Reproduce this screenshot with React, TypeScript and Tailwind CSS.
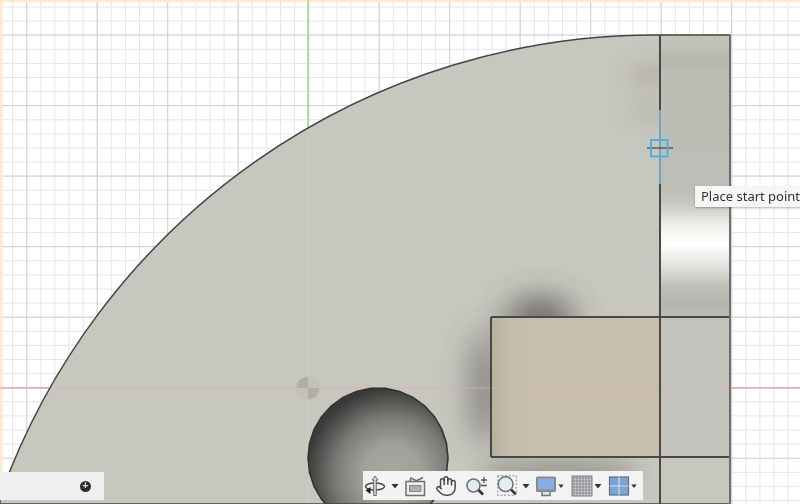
import { Hand } from "lucide-react";

const minorX = Array.from({ length: 58 }, (_, i) => 12.6 + i * 14.1);
const minorY = Array.from({ length: 36 }, (_, i) => 7 + i * 14.1);
const majorX = Array.from({ length: 12 }, (_, i) => 26.7 + i * 70.5);
const majorY = Array.from({ length: 7 }, (_, i) => 35 + i * 70.55);

const BODY = "M730,35 L660,35 A696,696 0 0 0 0,497 L0,504 L730,504 Z";
const holePts = Array.from({ length: 30 }, (_, i) => {
  const a = (i / 30) * Math.PI * 2;
  return `${378 + 70 * Math.cos(a)},${458 + 70 * Math.sin(a)}`;
}).join(" ");

function Scene() {
  return (
    <svg width="800" height="504" viewBox="0 0 800 504" className="block">
      <defs>
        <filter id="b18" filterUnits="userSpaceOnUse" x="0" y="0" width="800" height="504"><feGaussianBlur stdDeviation="16" /></filter>
        <filter id="b10" filterUnits="userSpaceOnUse" x="0" y="0" width="800" height="504"><feGaussianBlur stdDeviation="10" /></filter>
        <clipPath id="body"><path d={BODY} /></clipPath>
        <clipPath id="left"><path d="M660,35 A696,696 0 0 0 0,497 L0,504 L660,504 Z" /></clipPath>
        <linearGradient id="strip" gradientUnits="userSpaceOnUse" x1="0" y1="35" x2="0" y2="317">
          <stop offset="0" stopColor="#c4c4bb" />
          <stop offset="0.05" stopColor="#c0c0b6" />
          <stop offset="0.085" stopColor="#b6b6ab" />
          <stop offset="0.14" stopColor="#bcbdb5" />
          <stop offset="0.55" stopColor="#bcbeb7" />
          <stop offset="0.6" stopColor="#c9c9c4" />
          <stop offset="0.68" stopColor="#f2f2ee" />
          <stop offset="0.74" stopColor="#ffffff" />
          <stop offset="0.81" stopColor="#e6e6e2" />
          <stop offset="0.89" stopColor="#c0c0ba" />
          <stop offset="0.95" stopColor="#b5b5af" />
          <stop offset="1" stopColor="#bdbdb7" />
        </linearGradient>
        <linearGradient id="tan" gradientUnits="userSpaceOnUse" x1="491" y1="0" x2="660" y2="0">
          <stop offset="0" stopColor="#b5b09f" />
          <stop offset="0.1" stopColor="#c2bba7" />
          <stop offset="0.25" stopColor="#c8c0ac" />
          <stop offset="1" stopColor="#c7bfab" />
        </linearGradient>
        <radialGradient id="hole" gradientUnits="userSpaceOnUse" cx="392" cy="474" r="86">
          <stop offset="0" stopColor="#a9a9a3" />
          <stop offset="0.35" stopColor="#a0a09a" />
          <stop offset="0.65" stopColor="#7c7c78" />
          <stop offset="0.9" stopColor="#4c4c4a" />
          <stop offset="1" stopColor="#3a3a39" />
        </radialGradient>
      </defs>
      <rect width="800" height="504" fill="#ffffff" />
      {minorX.map((x) => <line key={`vx${x}`} x1={x} x2={x} y1="0" y2="504" stroke="#e6e6ea" strokeWidth="1" />)}
      {minorY.map((y) => <line key={`hy${y}`} x1="0" x2="800" y1={y} y2={y} stroke="#e6e6ea" strokeWidth="1" />)}
      {majorX.map((x) => <line key={`Vx${x}`} x1={x} x2={x} y1="0" y2="504" stroke="#d2d2d6" strokeWidth="1" />)}
      {majorY.map((y) => <line key={`Hy${y}`} x1="0" x2="800" y1={y} y2={y} stroke="#d2d2d6" strokeWidth="1" />)}
      <rect x="0" y="0" width="2.5" height="504" fill="#ffe9c8" />
      <rect x="0" y="0" width="800" height="2" fill="#ffe9c8" />
      <line x1="0" x2="800" y1="388" y2="388" stroke="#e88f8f" strokeWidth="1.2" />
      <line x1="308" x2="308" y1="0" y2="388" stroke="#8fdc88" strokeWidth="1.4" />

      <path d={BODY} fill="#c7c6bf" />
      <g clipPath="url(#left)">
        <ellipse cx="652" cy="75" rx="24" ry="12" fill="#a5a49c" opacity="0.55" filter="url(#b10)" />
        <ellipse cx="650" cy="112" rx="22" ry="10" fill="#a8a79f" opacity="0.5" filter="url(#b10)" />
        <ellipse cx="540" cy="318" rx="34" ry="18" fill="#3e3e3b" opacity="0.8" filter="url(#b18)" />
        <ellipse cx="486" cy="388" rx="14" ry="58" fill="#4c4c48" opacity="0.62" filter="url(#b18)" />
        <ellipse cx="560" cy="472" rx="80" ry="12" fill="#6f6f68" opacity="0.55" filter="url(#b10)" />
      </g>
      <rect x="660" y="35" width="70" height="282" fill="url(#strip)" />
      <rect x="660" y="317" width="70" height="140" fill="#c3c3bd" />
      <rect x="491" y="317" width="169" height="140" fill="url(#tan)" />
      <line x1="308" x2="308" y1="128" y2="504" stroke="#bfd8b8" strokeWidth="1" />
      <line x1="40" x2="730" y1="388" y2="388" stroke="#dcb0ac" strokeWidth="1" opacity="0.8" />

      <circle cx="308" cy="388" r="11.5" fill="#a9a8a1" opacity="0.8" />
      <path d="M308,376.5 A11.5,11.5 0 0 1 319.5,388 L308,388 Z M308,388 L296.5,388 A11.5,11.5 0 0 0 308,399.5 Z" fill="#c7c6bf" opacity="0.8" />

      <polygon points={holePts} fill="url(#hole)" stroke="#333331" strokeWidth="1.6" />

      <g clipPath="url(#body)" fill="none" stroke="#484846">
        <line x1="660" x2="660" y1="35" y2="504" strokeWidth="2" />
        <line x1="491" x2="730" y1="317" y2="317" strokeWidth="2" />
        <line x1="491" x2="730" y1="457" y2="457" strokeWidth="2" />
        <line x1="491" x2="491" y1="317" y2="457" strokeWidth="2" />
      </g>
      <line x1="660" x2="660" y1="110" y2="184" stroke="#6ea5c4" strokeWidth="2" />
      <path d={BODY} fill="none" stroke="#444442" strokeWidth="1.5" />
      <line x1="730" x2="730" y1="35" y2="504" stroke="#6e6e6c" strokeWidth="2" />

      <line x1="647" x2="673" y1="148" y2="148" stroke="#4c4c4a" strokeWidth="1.3" />
      <rect x="651" y="140" width="16.5" height="16.5" fill="none" stroke="#3fb0ea" strokeWidth="1.8" />
    </svg>
  );
}

function Arrow() {
  return (
    <svg width="8" height="6" viewBox="0 0 8 6"><path d="M0.5,1 H7.5 L4,5.5 Z" fill="#333" /></svg>
  );
}

function Orbit() {
  return (
    <svg width="24" height="24" viewBox="0 0 24 24" fill="none">
      <ellipse cx="12" cy="12.5" rx="9.5" ry="3.6" stroke="#4a4a4a" strokeWidth="1.5" />
      <path d="M12,2 L15,6 H13.3 V21.5 H10.7 V6 H9 Z" fill="#d8d8d8" stroke="#6a6a6a" strokeWidth="1" />
      <path d="M2.5,16.5 L7.5,13 V20 Z" fill="#222" />
    </svg>
  );
}

function LookAt() {
  return (
    <svg width="24" height="24" viewBox="0 0 24 24" fill="none">
      <rect x="3" y="7.5" width="18.5" height="14" fill="#eeeeee" stroke="#707070" strokeWidth="1.5" />
      <rect x="6.5" y="11.5" width="11.5" height="6" fill="#a8b0b8" stroke="#777" strokeWidth="0.8" />
      <path d="M7,7 L8,4 L13,6.5 M13,7 L20,3.5" stroke="#707070" strokeWidth="1.5" />
    </svg>
  );
}

function ZoomPlus() {
  return (
    <svg width="24" height="24" viewBox="0 0 24 24" fill="none">
      <circle cx="8.5" cy="11.5" r="6.5" fill="#e2edf2" stroke="#6c7478" strokeWidth="1.6" />
      <line x1="13.5" y1="16" x2="18" y2="20.5" stroke="#333" strokeWidth="2.6" />
      <path d="M19,3 V9 M16,6 H22 M16,11.5 H22" stroke="#555" strokeWidth="1.3" />
    </svg>
  );
}

function Fit() {
  return (
    <svg width="26" height="26" viewBox="0 0 26 26" fill="none">
      <path d="M3,2 H23 V21 M3,2 V23 H20" stroke="#888" strokeWidth="1.1" strokeDasharray="2 2" />
      <circle cx="11.5" cy="11" r="8" fill="#e4eef2" stroke="#6c7478" strokeWidth="1.7" />
      <line x1="17.5" y1="17" x2="22.5" y2="22" stroke="#333" strokeWidth="2.8" />
    </svg>
  );
}

function Display() {
  return (
    <svg width="24" height="24" viewBox="0 0 24 24" fill="none">
      <rect x="2" y="2.5" width="20" height="15.5" rx="1.5" fill="#8a8a8a" />
      <rect x="4" y="4.5" width="16" height="11" fill="#86b0e2" />
      <path d="M8,18 V21.5 H16 V18" stroke="#777" strokeWidth="1.5" fill="#e5e5e5" />
    </svg>
  );
}

function GridIcon() {
  const t = [4, 7, 10, 13, 16, 19];
  return (
    <svg width="24" height="24" viewBox="0 0 24 24" fill="none">
      <rect x="2" y="2" width="20" height="20" fill="#cfcfd4" stroke="#808084" strokeWidth="1" />
      {t.map((v) => <path key={v} d={`M${v},2 V22 M2,${v} H22`} stroke="#77777d" strokeWidth="0.7" />)}
    </svg>
  );
}

function Viewports() {
  return (
    <svg width="24" height="24" viewBox="0 0 24 24" fill="none">
      <rect x="2.5" y="3" width="19" height="18" fill="#7ea4d6" stroke="#5f6f86" strokeWidth="1.2" />
      <path d="M12,3 V21 M2.5,12 H21.5" stroke="#d4deea" strokeWidth="1.2" />
    </svg>
  );
}

export default function App() {
  return (
    <div className="relative w-[800px] h-[504px] overflow-hidden bg-white blur-[0.7px]">
      <Scene />

      <div className="absolute left-0 top-[472px] w-[104px] h-[28px] bg-[#efefef] flex items-center justify-end pr-[13px]">
        <span className="w-[11px] h-[11px] rounded-full bg-[#2e2e2e] flex items-center justify-center text-[#dddddd] text-[10px] leading-none font-bold font-['Liberation_Sans',sans-serif]">+</span>
      </div>

      <div className="absolute left-[363px] top-[471px] w-[280px] h-[29px] bg-[#f3f3f3] flex items-center">
        <div className="w-[24px] flex justify-center"><Orbit /></div>
        <div className="w-[16px] flex justify-center"><Arrow /></div>
        <div className="w-[24px] flex justify-center"><LookAt /></div>
        <div className="w-[24px] ml-[7px] flex justify-center"><Hand size={22} strokeWidth={1.6} color="#4a4a4a" /></div>
        <div className="w-[24px] ml-[7px] flex justify-center"><ZoomPlus /></div>
        <div className="w-[24px] ml-[6px] flex justify-center"><Fit /></div>
        <div className="w-[14px] flex justify-center"><Arrow /></div>
        <div className="w-[24px] ml-px flex justify-center"><Display /></div>
        <div className="w-[6px] flex justify-center"><Arrow /></div>
        <div className="w-[24px] ml-[6px] flex justify-center"><GridIcon /></div>
        <div className="w-[8px] flex justify-center"><Arrow /></div>
        <div className="w-[24px] ml-[5px] flex justify-center"><Viewports /></div>
        <div className="w-[6px] flex justify-center"><Arrow /></div>
      </div>

      <div className="absolute left-[695px] top-[186px] w-[110px] h-[21px] bg-[#f6f6f6] shadow-[0_1px_2px_rgba(0,0,0,0.3)] pl-[6px] text-[13px] leading-[21px] text-[#333333] whitespace-nowrap font-['Noto_Sans',sans-serif]">
        Place start point
      </div>
    </div>
  );
}
